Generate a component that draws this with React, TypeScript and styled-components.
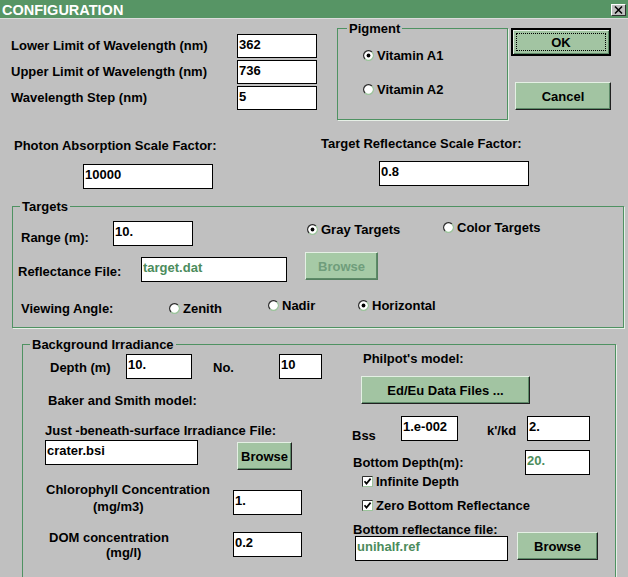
import React from "react";
import styled, { createGlobalStyle } from "styled-components";

const GREEN_LINE = "#4f9262";
const GREEN_TEXT = "#4c8c5c";
const BTN_FACE = "#a2c4a2";

const GlobalStyle = createGlobalStyle`
  html, body {
    margin: 0;
    padding: 0;
    background: #c0c0c0;
  }
`;

interface IBox {
  $w?: number;
  $h?: number;
  $mt?: number;
  $ml?: number;
}

const px = (v?: number) => (v === undefined ? "auto" : `${v}px`);

const Dialog = styled.div`
  width: 628px;
  height: 577px;
  overflow: hidden;
  background: #c0c0c0;
  display: flex;
  flex-direction: column;
  font-family: "Liberation Sans", Arial, sans-serif;
  font-weight: bold;
  font-size: 13px;
  line-height: 15px;
  color: #000;
`;

const TitleBar = styled.div`
  flex: none;
  height: 16px;
  padding: 2px 0 0 2px;
  background: #579565;
  border-bottom: 1px solid #dcdcdc;
  display: flex;
  justify-content: space-between;
  align-items: flex-start;
  color: #fff;
  font-size: 14.5px;
  line-height: 16px;
`;

const CloseBox = styled.div`
  width: 15px;
  height: 12px;
  box-sizing: border-box;
  margin: 2px 2px 0 0;
  background: #c0c0c0;
  border: 1px solid;
  border-color: #fff #303030 #303030 #fff;
  display: flex;
  align-items: center;
  justify-content: center;
`;

const TopSection = styled.div`
  flex: none;
  height: 101px;
  display: flex;
  align-items: flex-start;
`;

const WaveForm = styled.div`
  margin: 15px 0 0 11px;
  display: flex;
  flex-direction: column;
  gap: 2px;
`;

const Row = styled.div<{ $mt?: number; $pl?: number }>`
  display: flex;
  align-items: flex-start;
  flex: none;
  margin-top: ${(p) => p.$mt ?? 0}px;
  padding-left: ${(p) => p.$pl ?? 0}px;
`;

const Label = styled.span<IBox>`
  display: block;
  flex: none;
  white-space: nowrap;
  width: ${(p) => px(p.$w)};
  margin-top: ${(p) => p.$mt ?? 0}px;
  margin-left: ${(p) => p.$ml ?? 0}px;
`;

const LabelBlock = styled.div<IBox & { $lh: number; $indent: number }>`
  flex: none;
  width: ${(p) => px(p.$w)};
  margin-left: ${(p) => p.$ml ?? 0}px;
  line-height: ${(p) => p.$lh}px;
  white-space: nowrap;
  span {
    display: block;
  }
  span + span {
    padding-left: ${(p) => p.$indent}px;
  }
`;

const TextBox = styled.input<IBox & { $green?: boolean }>`
  flex: none;
  box-sizing: border-box;
  width: ${(p) => px(p.$w)};
  height: ${(p) => p.$h ?? 25}px;
  margin: ${(p) => p.$mt ?? 0}px 0 0 ${(p) => p.$ml ?? 0}px;
  padding: 0 0 4px 1px;
  border: 1px solid #000;
  border-radius: 0;
  background: #fff;
  font: inherit;
  color: ${(p) => (p.$green ? GREEN_TEXT : "#000")};
  outline: none;
`;

const Button = styled.button<IBox & { $default?: boolean }>`
  flex: none;
  box-sizing: border-box;
  width: ${(p) => px(p.$w)};
  height: ${(p) => p.$h ?? 28}px;
  margin: ${(p) => p.$mt ?? 0}px 0 0 ${(p) => p.$ml ?? 0}px;
  padding: 0;
  position: relative;
  background: ${BTN_FACE};
  font: inherit;
  color: #000;
  border: ${(p) => (p.$default ? "2px solid #000" : "1px solid")};
  border-color: ${(p) =>
    p.$default ? "#000" : "#e4f0e4 #202020 #202020 #e4f0e4"};
  box-shadow: ${(p) =>
    p.$default
      ? "inset 1px 1px 0 #e4f0e4, inset -1px -1px 0 #5d8a68"
      : "inset -1px -1px 0 #5d8a68"};
  &:disabled {
    color: #6f9d7b;
    background: #a6caa6;
    border-color: #e4f0e4 #55805f #55805f #e4f0e4;
  }
  ${(p) =>
    p.$default &&
    `
    &::after {
      content: "";
      position: absolute;
      inset: 3px;
      border: 1px dotted #000;
    }
  `}
`;

const Group = styled.div<IBox & { $row?: boolean }>`
  flex: none;
  position: relative;
  box-sizing: border-box;
  width: ${(p) => px(p.$w)};
  height: ${(p) => px(p.$h)};
  margin: ${(p) => p.$mt ?? 0}px 0 0 ${(p) => p.$ml ?? 0}px;
  border: 1px solid ${GREEN_LINE};
  box-shadow: 1px 1px 0 #e6efe6;
  display: flex;
  flex-direction: ${(p) => (p.$row ? "row" : "column")};
  align-items: flex-start;
`;

const Legend = styled.span<{ $left: number }>`
  position: absolute;
  top: -8px;
  left: ${(p) => p.$left}px;
  padding: 0 2px;
  background: #c0c0c0;
  white-space: nowrap;
`;

const PigmentBody = styled.div`
  display: flex;
  flex-direction: column;
  gap: 19px;
  padding: 18.5px 0 0 25px;
`;

const ButtonColumn = styled.div`
  display: flex;
  flex-direction: column;
  margin: 9px 0 0 3px;
`;

const ScaleRow = styled.div`
  flex: none;
  height: 86px;
  display: flex;
  align-items: flex-start;
`;

const ScaleCol = styled.div<{ $ml: number; $pt: number; $w?: number }>`
  flex: none;
  display: flex;
  flex-direction: column;
  align-items: flex-start;
  margin-left: ${(p) => p.$ml}px;
  padding-top: ${(p) => p.$pt}px;
  width: ${(p) => px(p.$w)};
`;

const Column = styled.div<{ $w?: number }>`
  flex: none;
  width: ${(p) => px(p.$w)};
  display: flex;
  flex-direction: column;
  align-items: flex-start;
`;

const ChoiceItem = styled.label<IBox>`
  flex: none;
  display: flex;
  align-items: center;
  gap: 3px;
  height: 15px;
  white-space: nowrap;
  width: ${(p) => px(p.$w)};
  margin-top: ${(p) => p.$mt ?? 0}px;
  margin-left: ${(p) => p.$ml ?? 0}px;
  svg {
    flex: none;
    display: block;
  }
`;

const RadioMark = ({ on }: { on?: boolean }) => (
  <svg width="11" height="11" viewBox="0 0 11 11">
    <circle cx="5.5" cy="5.5" r="4.8" fill="#fff" />
    <path d="M2.1 8.9 A4.8 4.8 0 0 1 8.9 2.1" fill="none" stroke="#303030" strokeWidth="1.4" />
    <path d="M8.9 2.1 A4.8 4.8 0 0 1 2.1 8.9" fill="none" stroke="#9cc49c" strokeWidth="1.4" />
    {on && <circle cx="5.5" cy="5.5" r="1.9" fill="#000" />}
  </svg>
);

const CheckMark = () => (
  <svg width="11" height="11" viewBox="0 0 11 11">
    <rect x="0.5" y="0.5" width="10" height="10" fill="#fff" stroke="#9cc49c" />
    <path d="M0.5 10.5 V0.5 H10.5" fill="none" stroke="#303030" />
    <path d="M2.5 5.2 L4.5 7.6 L8.6 2.6" fill="none" stroke="#000" strokeWidth="1.7" />
  </svg>
);

const Radio = ({ text, on, ...rest }: IBox & { text: string; on?: boolean }) => (
  <ChoiceItem {...rest}>
    <RadioMark on={on} />
    {text}
  </ChoiceItem>
);

const Check = ({ text, ...rest }: IBox & { text: string }) => (
  <ChoiceItem {...rest}>
    <CheckMark />
    {text}
  </ChoiceItem>
);

const App = () => {
  return (
    <>
      <GlobalStyle />
      <Dialog>
        <TitleBar>
          CONFIGURATION
          <CloseBox>
            <svg width="9" height="8" viewBox="0 0 9 8">
              <path d="M1 0.5 L8 7.5 M8 0.5 L1 7.5" stroke="#000" strokeWidth="1.5" />
            </svg>
          </CloseBox>
        </TitleBar>

        <TopSection>
          <WaveForm>
            <Row>
              <Label $w={226} $mt={4}>Lower Limit of Wavelength (nm)</Label>
              <TextBox $w={80} $h={24} defaultValue="362" readOnly />
            </Row>
            <Row>
              <Label $w={226} $mt={4}>Upper Limit of Wavelength (nm)</Label>
              <TextBox $w={80} $h={24} defaultValue="736" readOnly />
            </Row>
            <Row>
              <Label $w={226} $mt={4}>Wavelength Step (nm)</Label>
              <TextBox $w={80} $h={24} defaultValue="5" readOnly />
            </Row>
          </WaveForm>

          <Group $w={171} $h={92} $ml={20} $mt={9}>
            <Legend $left={9}>Pigment</Legend>
            <PigmentBody>
              <Radio text="Vitamin A1" on />
              <Radio text="Vitamin A2" />
            </PigmentBody>
          </Group>

          <ButtonColumn>
            <Button $w={100} $default>OK</Button>
            <Button $w={96} $ml={4} $mt={26}>Cancel</Button>
          </ButtonColumn>
        </TopSection>

        <ScaleRow>
          <ScaleCol $ml={14} $pt={18} $w={307}>
            <Label>Photon Absorption Scale Factor:</Label>
            <TextBox $w={130} $ml={69} $mt={11} defaultValue="10000" readOnly />
          </ScaleCol>
          <ScaleCol $ml={0} $pt={16}>
            <Label>Target Reflectance Scale Factor:</Label>
            <TextBox $w={150} $ml={58} $mt={10} defaultValue="0.8" readOnly />
          </ScaleCol>
        </ScaleRow>

        <Group $w={612} $h={122} $ml={12}>
          <Legend $left={7}>Targets</Legend>
          <Row $mt={12} $pl={8}>
            <Label $w={92} $mt={11}>Range (m):</Label>
            <TextBox $w={80} $mt={2} defaultValue="10." readOnly />
            <Radio $ml={114} $w={136} $mt={2.5} text="Gray Targets" on />
            <Radio $mt={0.5} text="Color Targets" />
          </Row>
          <Row $mt={6} $pl={5}>
            <Label $w={123} $mt={12}>Reflectance File:</Label>
            <TextBox $w={146} $mt={5} $green defaultValue="target.dat" readOnly />
            <Button $w={73} $ml={18} disabled>Browse</Button>
          </Row>
          <Row $mt={15.5} $pl={8}>
            <Label $w={148} $mt={3.5}>Viewing Angle:</Label>
            <Radio $w={99} $mt={3} text="Zenith" />
            <Radio $w={90} text="Nadir" />
            <Radio text="Horizontal" on />
          </Row>
        </Group>

        <Group $w={594} $h={250} $ml={22} $mt={16} $row>
          <Legend $left={7}>Background Irradiance</Legend>
          <Column $w={329}>
            <Row $mt={9}>
              <Label $ml={27} $w={76} $mt={6}>Depth (m)</Label>
              <TextBox $w={66} defaultValue="10." readOnly />
              <Label $ml={21} $w={66} $mt={6}>No.</Label>
              <TextBox $w={43} defaultValue="10" readOnly />
            </Row>
            <Label $ml={25} $mt={14}>Baker and Smith model:</Label>
            <Label $ml={22} $mt={15}>Just -beneath-surface Irradiance File:</Label>
            <Row $mt={2}>
              <TextBox $ml={22} $w={153} defaultValue="crater.bsi" readOnly />
              <Button $ml={39} $mt={2} $w={55}>Browse</Button>
            </Row>
            <Row $mt={11}>
              <LabelBlock $ml={23} $w={187} $lh={17} $indent={47}>
                <span>Chlorophyll Concentration</span>
                <span>(mg/m3)</span>
              </LabelBlock>
              <TextBox $w={69} $mt={9} defaultValue="1." readOnly />
            </Row>
            <Row $mt={15}>
              <LabelBlock $ml={26} $w={184} $lh={15} $indent={57}>
                <span>DOM concentration</span>
                <span>(mg/l)</span>
              </LabelBlock>
              <TextBox $w={69} $mt={2} defaultValue="0.2" readOnly />
            </Row>
          </Column>

          <Column>
            <Label $ml={11} $mt={6}>Philpot's model:</Label>
            <Button $ml={9} $mt={10} $w={169}>Ed/Eu Data Files ...</Button>
            <Row $mt={12}>
              <Label $w={49} $mt={12}>Bss</Label>
              <TextBox $w={57} defaultValue="1.e-002" readOnly />
              <Label $ml={29} $w={40} $mt={7}>k'/kd</Label>
              <TextBox $w={63} defaultValue="2." readOnly />
            </Row>
            <Row $mt={7}>
              <Label $ml={1} $w={172} $mt={5}>Bottom Depth(m):</Label>
              <TextBox $w={65} $green defaultValue="20." readOnly />
            </Row>
            <Check $ml={10} $mt={-1} text="Infinite Depth" />
            <Check $ml={10} $mt={8.5} text="Zero Bottom Reflectance" />
            <Label $ml={1} $mt={9.5}>Bottom reflectance file:</Label>
            <Row $mt={-5}>
              <TextBox $ml={3} $mt={4} $w={153} $green defaultValue="unihalf.ref" readOnly />
              <Button $ml={9} $w={81}>Browse</Button>
            </Row>
          </Column>
        </Group>
      </Dialog>
    </>
  );
};

export default App;
